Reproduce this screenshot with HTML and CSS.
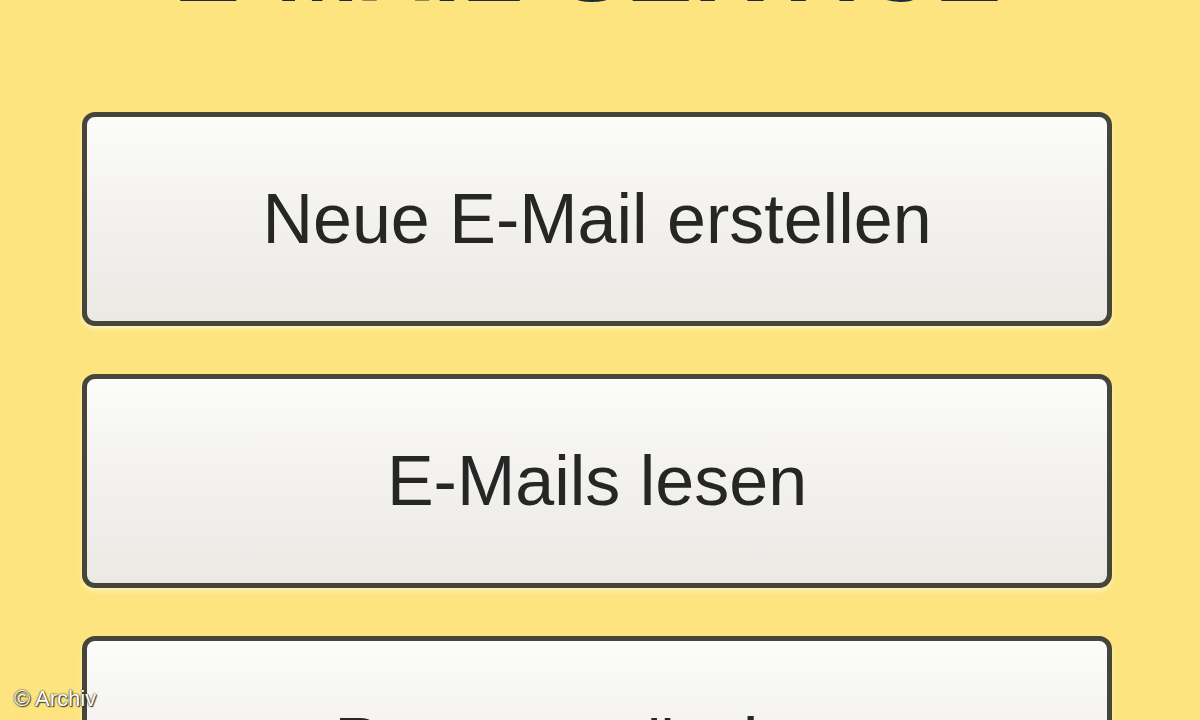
FILE: index.html
```html
<!DOCTYPE html>
<html lang="de">
<head>
<meta charset="utf-8">
<title>E-Mail</title>
<link rel="stylesheet" href="styles.css">
</head>
<body>
<div class="page">
  <div class="title"><span class="title-text">E-MAIL-SERVICE</span></div>
  <nav class="menu">
    <button class="menu-btn" type="button">Neue E-Mail erstellen</button>
    <button class="menu-btn" type="button">E-Mails lesen</button>
    <button class="menu-btn" type="button">Passwort ändern</button>
  </nav>
  <div class="credit">© Archiv</div>
</div>
</body>
</html>
```
FILE: styles.css
```css
html, body {
  margin: 0;
  padding: 0;
}
body {
  width: 1200px;
  height: 720px;
  overflow: hidden;
  background: #fde47e;
  font-family: "Liberation Sans", Arial, sans-serif;
}
.page {
  position: relative;
  width: 1200px;
  height: 720px;
  overflow: hidden;
}
.title {
  height: 24px;
  overflow: hidden;
  display: flex;
  align-items: flex-end;
  justify-content: center;
  padding-right: 24px;
}
.title-text {
  font-size: 100px;
  line-height: 1;
  font-weight: bold;
  color: #1c2a3c;
  letter-spacing: 1px;
  white-space: nowrap;
  margin-bottom: 8px;
}
.menu {
  display: flex;
  flex-direction: column;
  gap: 48px;
  padding: 88px 88px 0 82px;
}
.menu-btn {
  box-sizing: border-box;
  flex: none;
  height: 214px;
  width: 100%;
  margin: 0;
  padding: 0;
  border: 5px solid #45453a;
  border-radius: 13px;
  background: linear-gradient(to bottom, #fcfcfa 0%, #f3f2ef 45%, #ebe9e4 100%);
  box-shadow: 0 3px 5px rgba(255, 255, 235, 0.55), inset 0 1px 0 #ffffff;
  display: flex;
  align-items: center;
  justify-content: center;
  font-family: "Liberation Sans", Arial, sans-serif;
  font-size: 70px;
  line-height: 1;
  font-weight: normal;
  color: #262626;
  cursor: pointer;
}
.credit {
  position: absolute;
  left: 14px;
  bottom: 10px;
  font-family: "Liberation Sans", Arial, sans-serif;
  font-size: 22px;
  line-height: 1;
  color: #ffffff;
  text-shadow: 0 0 2px #3a3a2a, 0 0 1px #3a3a2a, 1px 1px 1px #3a3a2a;
}
```
